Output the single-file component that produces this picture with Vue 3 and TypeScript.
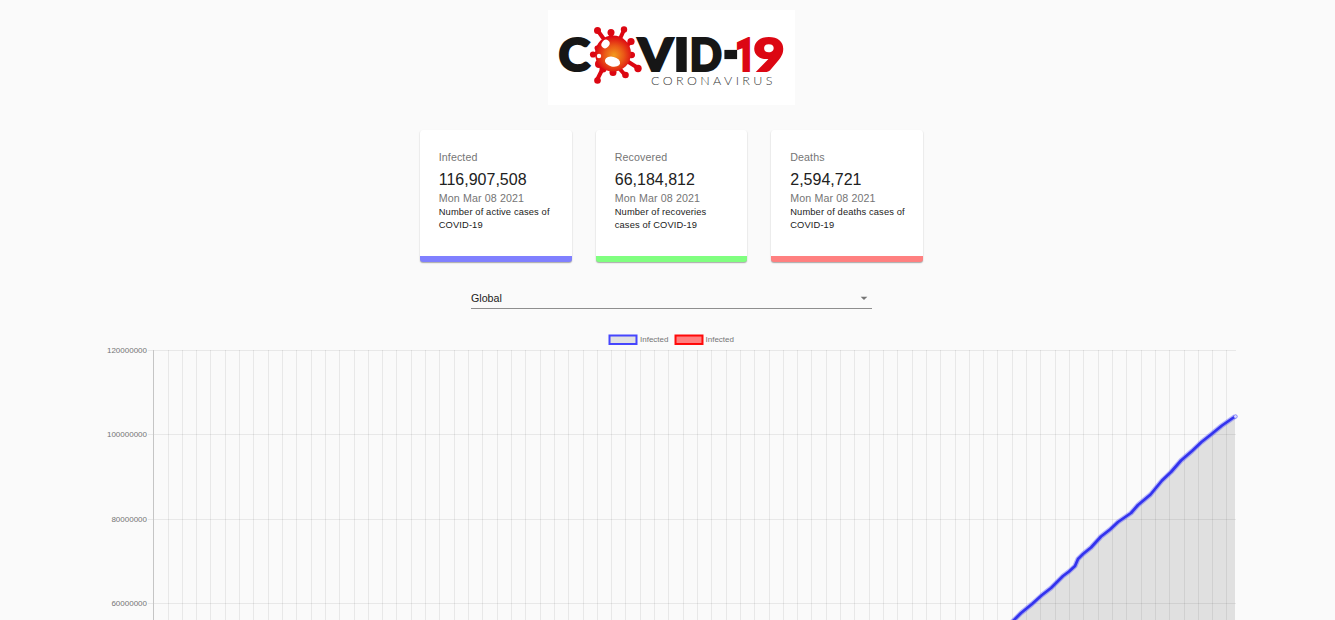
<script setup lang="ts">
interface Stat {
  kind: string
  title: string
  value: string
  text: string
}

const date = 'Mon Mar 08 2021'
const stats: Stat[] = [
  { kind: 'infected', title: 'Infected', value: '116,907,508', text: 'Number of active cases of COVID-19' },
  { kind: 'recovered', title: 'Recovered', value: '66,184,812', text: 'Number of recoveries cases of COVID-19' },
  { kind: 'deaths', title: 'Deaths', value: '2,594,721', text: 'Number of deaths cases of COVID-19' },
]

// Chart coordinates are relative to the plot svg, whose origin is the left page edge at y = 325.
const columns: number[] = Array.from({ length: 75 }, (_, i) => Math.floor(153.7 + (i + 1) * 14.31))
const rows = [
  { y: 25, label: '120000000' },
  { y: 109, label: '100000000' },
  { y: 194, label: '80000000' },
  { y: 278, label: '60000000' },
]
const series: [number, number][] = [
  [1002, 305], [1012, 297], [1021, 288], [1032, 279], [1042, 270], [1051, 263], [1063, 251],
  [1069, 246.5], [1075, 241], [1078, 234], [1083, 229], [1091, 222.5], [1101, 211.5], [1110, 204.5],
  [1118, 197], [1131, 188], [1138, 180], [1150.5, 169.5], [1162, 155.5], [1171, 147], [1181, 135.5],
  [1192, 126], [1201.5, 117], [1211, 109.5], [1222, 100.5], [1235, 91.5],
]
const line = series.map(([x, y]) => `${x},${y}`).join(' ')
const area = `${line} 1235,310 1002,310`
</script>

<template>
  <main class="page">
    <svg class="logo" width="247" height="95" viewBox="0 0 247 95" role="img" aria-label="COVID-19 Coronavirus">
      <defs>
        <radialGradient id="virus" cx="0.53" cy="0.55" r="0.53">
          <stop offset="0" stop-color="#f39a1d" />
          <stop offset="0.5" stop-color="#ea5917" />
          <stop offset="1" stop-color="#dc0712" />
        </radialGradient>
      </defs>
      <rect width="247" height="95" fill="#fff" />
      <g class="word">
        <text x="10.500" y="60.500" textLength="31.500" lengthAdjust="spacingAndGlyphs">C</text>
        <text x="90" y="60.500" textLength="35" lengthAdjust="spacingAndGlyphs">V</text>
        <text x="125.500" y="60.500" textLength="16" lengthAdjust="spacingAndGlyphs">I</text>
        <text x="141.500" y="60.500" textLength="32.500" lengthAdjust="spacingAndGlyphs">D</text>
        <rect x="177.500" y="41" width="10.500" height="7" />
        <text class="red one" x="187" y="60.500" textLength="20" lengthAdjust="spacingAndGlyphs">1</text>
        <text class="red" x="205.500" y="60.500" textLength="31" lengthAdjust="spacingAndGlyphs">9</text>
      </g>
      <g stroke="#dc0712" stroke-width="4" stroke-linecap="round" fill="#dc0712">
        <path d="M50 21 58 32M63 24V30M76 20 71 31M83 32 76 38M85 45H79M90 58 79 51M77 65 71 58M65 62V58M49 70 57 54M45 44H51" />
        <g stroke="none">
          <circle cx="49.500" cy="20.500" r="3.500" />
          <circle cx="63" cy="22.500" r="3.500" />
          <circle cx="76" cy="19.500" r="3.200" />
          <circle cx="83" cy="31.500" r="3.600" />
          <circle cx="83.500" cy="45" r="3.300" />
          <circle cx="90" cy="58.500" r="3.700" />
          <circle cx="77.500" cy="65" r="3.300" />
          <circle cx="65" cy="62.500" r="3.500" />
          <circle cx="49.500" cy="70.500" r="3.300" />
          <circle cx="45" cy="44.500" r="3.100" />
          <circle cx="51" cy="54" r="4" />
          <circle cx="55" cy="59" r="3.500" />
          <circle cx="49" cy="38" r="2.500" />
        </g>
      </g>
      <circle cx="65" cy="43.500" r="18" fill="url(#virus)" />
      <ellipse cx="57.500" cy="34" rx="3.800" ry="4.400" transform="rotate(38 57.500 34)" fill="#fff" />
      <circle cx="51" cy="46" r="2.200" fill="#fff" />
      <ellipse cx="64.500" cy="51.700" rx="7.700" ry="4.900" transform="rotate(13 64.500 51.700)" fill="#fff" />
      <text class="subtitle" x="103" y="75" textLength="121.500">CORONAVIRUS</text>
    </svg>

    <section class="cards">
      <article v-for="stat in stats" :key="stat.kind" class="card" :class="stat.kind">
        <p class="title">{{ stat.title }}</p>
        <p class="value">{{ stat.value }}</p>
        <p class="date">{{ date }}</p>
        <p class="text">{{ stat.text }}</p>
      </article>
    </section>

    <div class="select">
      <span>Global</span>
      <svg width="16" height="16" viewBox="0 0 24 24"><path d="M7 10l5 5 5-5z" fill="#757575" /></svg>
    </div>

    <svg class="chart" width="1335" height="295" viewBox="0 0 1335 295">
      <rect x="609.500" y="10.500" width="27" height="8.500" fill="#e1e1e1" stroke="#3333ff" stroke-opacity="0.9" stroke-width="2" />
      <text class="label" x="640" y="17">Infected</text>
      <rect x="675.500" y="10.500" width="27" height="8.500" fill="#ff7f7f" stroke="#f00" stroke-opacity="0.95" stroke-width="2" />
      <text class="label" x="705.500" y="17">Infected</text>

      <g v-for="row in rows" :key="row.label">
        <rect class="grid" x="148" :y="row.y" width="1088" height="1" />
        <text class="label" x="147" :y="row.y + 3" text-anchor="end">{{ row.label }}</text>
      </g>
      <rect v-for="x in columns" :key="x" class="grid" :x="x" y="25" width="1" height="270" />
      <rect x="153" y="25" width="1" height="270" fill="#c5c5c5" />

      <polygon :points="area" fill="#000" fill-opacity="0.1" />
      <polyline :points="line" fill="none" stroke="#3333ff" stroke-opacity="0.35" stroke-width="5" stroke-linejoin="round" />
      <polyline :points="line" fill="none" stroke="#3333ee" stroke-width="2.700" stroke-linejoin="round" />
      <circle cx="1235.500" cy="91.500" r="1.800" fill="#dedef8" stroke="#3333ff" stroke-opacity="0.6" stroke-width="0.800" />
    </svg>
  </main>
</template>

<style>
body {
  background: #fafafa;
  overflow: hidden;
}
</style>

<style scoped>
.page {
  box-sizing: border-box;
  width: 1335px;
  height: 620px;
  padding-top: 10px;
  overflow: hidden;
  display: flex;
  flex-direction: column;
  align-items: center;
  background: #fafafa;
  font-family: "Liberation Sans", Arial, sans-serif;
}
.logo {
  display: block;
  flex: none;
  margin-left: 8px;
}
.word {
  font-family: Lato, "Open Sans", sans-serif;
  font-size: 46px;
  font-weight: 900;
  fill: #161616;
  stroke: #161616;
  stroke-width: 2.2px;
}
.word .red {
  fill: #dc0713;
  stroke: #dc0713;
}
.word .one {
  font-family: Roboto, "Open Sans", sans-serif;
}
.subtitle {
  font-family: Lato, "Open Sans", sans-serif;
  font-size: 12.5px;
  font-weight: 300;
  fill: #333;
}
.cards {
  flex: none;
  display: grid;
  grid-template-columns: 152px 151.5px 152px;
  gap: 24px;
  margin: 25px 0 0 8px;
}
.card {
  box-sizing: border-box;
  height: 132px;
  padding: 19px 17px 0 19px;
  background: #fff;
  border-bottom: 6px solid;
  border-radius: 3px;
  box-shadow: 0 1px 1px rgba(0, 0, 0, 0.24), 0 1px 2px rgba(0, 0, 0, 0.12);
}
.infected { border-bottom-color: #8080ff; }
.recovered { border-bottom-color: #80ff80; }
.deaths { border-bottom-color: #ff8080; }
.card p {
  margin: 0;
}
.card .title,
.card .date {
  font-size: 10.67px;
  line-height: 16px;
  letter-spacing: 0.1px;
  color: #757575;
}
.card .title {
  margin-bottom: 5px;
}
.card .date {
  line-height: 15px;
  letter-spacing: 0.12px;
}
.card .value {
  margin-bottom: 1px;
  font-size: 16px;
  line-height: 20px;
  color: #212121;
}
.card .text {
  font-size: 9.33px;
  line-height: 13px;
  letter-spacing: 0.12px;
  color: #212121;
}
.select {
  box-sizing: border-box;
  flex: none;
  width: 401px;
  height: 21px;
  margin: 26px 0 0 8px;
  display: flex;
  align-items: center;
  justify-content: space-between;
  border-bottom: 1px solid #8e8e8e;
  font-size: 10.67px;
  color: #212121;
}
.chart {
  display: block;
  flex: none;
  margin-top: 16px;
}
.grid {
  fill: #000;
  fill-opacity: 0.07;
}
.label {
  font-size: 8px;
  fill: #757575;
}
</style>
